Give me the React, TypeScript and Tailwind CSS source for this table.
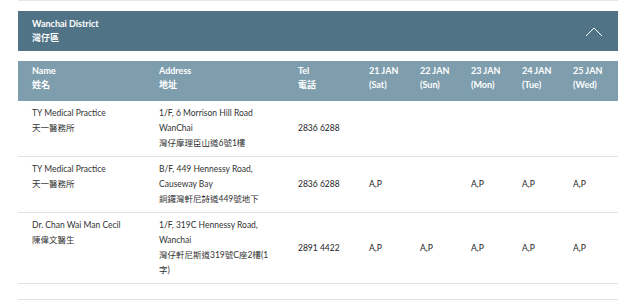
import React from "react";

const cols = "grid grid-cols-[127px_139px_71px_51px_51px_51px_51px_1fr]";

type Row = {
  en: string;
  zh: string;
  addr: string[];
  tel: string;
  days: string[];
};

const rows: Row[] = [
  {
    en: "TY Medical Practice",
    zh: "天一醫務所",
    addr: ["1/F, 6 Morrison Hill Road", "WanChai", "灣仔摩理臣山道6號1樓"],
    tel: "2836 6288",
    days: ["", "", "", "", ""],
  },
  {
    en: "TY Medical Practice",
    zh: "天一醫務所",
    addr: ["B/F, 449 Hennessy Road,", "Causeway Bay", "銅鑼灣軒尼詩道449號地下"],
    tel: "2836 6288",
    days: ["A,P", "", "A,P", "A,P", "A,P"],
  },
  {
    en: "Dr. Chan Wai Man Cecil",
    zh: "陳偉文醫生",
    addr: ["1/F, 319C Hennessy Road,", "Wanchai", "灣仔軒尼斯道319號C座2樓(1字)"],
    tel: "2891 4422",
    days: ["A,P", "A,P", "A,P", "A,P", "A,P"],
  },
];

const days = [
  ["21 JAN", "(Sat)"],
  ["22 JAN", "(Sun)"],
  ["23 JAN", "(Mon)"],
  ["24 JAN", "(Tue)"],
  ["25 JAN", "(Wed)"],
];

export default function App() {
  return (
    <div
      className="w-[642px] h-[302px] bg-white overflow-hidden"
      style={{ fontFamily: "Lato, 'Noto Sans CJK TC', sans-serif" }}
    >
      <div className="mx-[18px] w-[600px]">
        <div className="h-[1px] bg-[#e6e6e6]" />
        <div className="mt-[10px] h-[40px] bg-[#517386] flex items-center justify-between pl-[14px] pr-[15px] text-white font-bold text-[9px] leading-[14px]">
          <div>
            <div>Wanchai District</div>
            <div>灣仔區</div>
          </div>
          <svg width="18" height="10" viewBox="0 0 18 10" className="mt-[2px]">
            <polyline points="1,9 9,1 17,9" fill="none" stroke="#ffffff" strokeWidth="1" />
          </svg>
        </div>
        <div className={`mt-[10px] h-[40px] bg-[#7e9eae] ${cols} items-center text-white font-bold text-[9px] leading-[14px]`}>
          <div className="pl-[14px]">
            <div>Name</div>
            <div>姓名</div>
          </div>
          <div className="pl-[14px]">
            <div>Address</div>
            <div>地址</div>
          </div>
          <div className="pl-[14px]">
            <div>Tel</div>
            <div>電話</div>
          </div>
          {days.map((d) => (
            <div key={d[0]} className="pl-[14px]">
              <div>{d[0]}</div>
              <div>{d[1]}</div>
            </div>
          ))}
          <div />
        </div>
        {rows.map((r, i) => (
          <div
            key={i}
            className={`${cols} border-b border-[#e3e3e3] py-[5px] text-[8.5px] leading-[15px] text-[#333333]`}
          >
            <div className="pl-[14px]">
              <div>{r.en}</div>
              <div>{r.zh}</div>
            </div>
            <div className="pl-[14px] pr-[12px]">
              {r.addr.map((a, j) => (
                <div key={j}>{a}</div>
              ))}
            </div>
            <div className="pl-[14px] self-center text-[#222]">{r.tel}</div>
            {r.days.map((d, j) => (
              <div key={j} className="pl-[14px] self-center text-[#222]">
                {d}
              </div>
            ))}
            <div />
          </div>
        ))}
        <div className="h-[16px] border-b border-[#e3e3e3]" />
      </div>
    </div>
  );
}
